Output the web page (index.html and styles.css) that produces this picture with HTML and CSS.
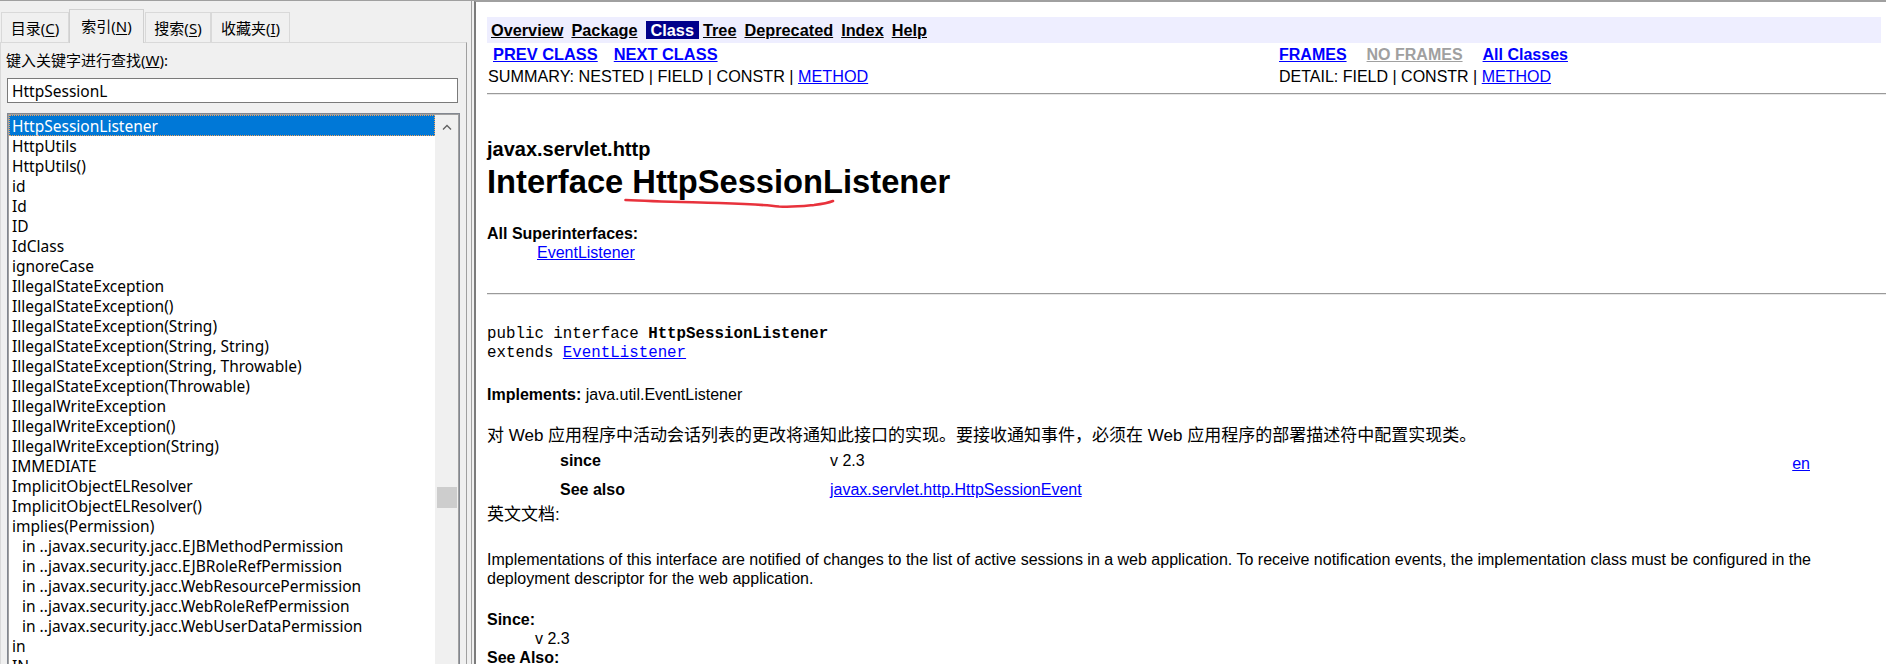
FILE: index.html
```html
<!DOCTYPE html>
<html lang="zh-CN">
<head>
<meta charset="utf-8">
<title>HttpSessionListener</title>
<link rel="stylesheet" href="styles.css">
</head>
<body>
<div class="app">
  <aside class="left">
    <div class="tabs">
      <div class="tab t1">目录(<u>C</u>)</div>
      <div class="tab t2 active">索引(<u>N</u>)</div>
      <div class="tab t3">搜索(<u>S</u>)</div>
      <div class="tab t4">收藏夹(<u>I</u>)</div>
    </div>
    <div class="panel">
      <div class="kw">键入关键字进行查找(<u>W</u>):</div>
      <div class="input">HttpSessionL</div>
      <div class="listbox">
        <ul class="list">
          <li class="sel">HttpSessionListener</li>
          <li>HttpUtils</li>
          <li>HttpUtils()</li>
          <li>id</li>
          <li>Id</li>
          <li>ID</li>
          <li>IdClass</li>
          <li>ignoreCase</li>
          <li>IllegalStateException</li>
          <li>IllegalStateException()</li>
          <li>IllegalStateException(String)</li>
          <li>IllegalStateException(String, String)</li>
          <li>IllegalStateException(String, Throwable)</li>
          <li>IllegalStateException(Throwable)</li>
          <li>IllegalWriteException</li>
          <li>IllegalWriteException()</li>
          <li>IllegalWriteException(String)</li>
          <li>IMMEDIATE</li>
          <li>ImplicitObjectELResolver</li>
          <li>ImplicitObjectELResolver()</li>
          <li>implies(Permission)</li>
          <li class="sub">in ..javax.security.jacc.EJBMethodPermission</li>
          <li class="sub">in ..javax.security.jacc.EJBRoleRefPermission</li>
          <li class="sub">in ..javax.security.jacc.WebResourcePermission</li>
          <li class="sub">in ..javax.security.jacc.WebRoleRefPermission</li>
          <li class="sub">in ..javax.security.jacc.WebUserDataPermission</li>
          <li>in</li>
          <li>IN</li>
        </ul>
        <div class="vscroll">
          <div class="arrow"><svg width="10" height="6" viewBox="0 0 10 6"><polyline points="1,5.5 5,1.5 9,5.5" fill="none" stroke="#606060" stroke-width="1.3"/></svg></div>
          <div class="thumb"></div>
        </div>
      </div>
    </div>
  </aside>
  <div class="splitter"></div>
  <main class="right">
    <nav class="navbar">
      <a href="#">Overview</a>
      <a href="#">Package</a>
      <span class="cur">Class</span>
      <a href="#">Tree</a>
      <a href="#">Deprecated</a>
      <a href="#">Index</a>
      <a href="#">Help</a>
    </nav>
    <div class="subnav">
      <div class="cell links first"><a href="#" class="bl">PREV CLASS</a><a href="#" class="bl">NEXT CLASS</a></div>
      <div class="cell links frames"><a href="#" class="bl">FRAMES</a><a href="#" class="bl gray">NO FRAMES</a><a href="#" class="bl">All Classes</a></div>
      <div class="cell summary">SUMMARY:&nbsp;NESTED&nbsp;|&nbsp;FIELD&nbsp;|&nbsp;CONSTR&nbsp;|&nbsp;<a href="#">METHOD</a></div>
      <div class="cell">DETAIL:&nbsp;FIELD&nbsp;|&nbsp;CONSTR&nbsp;|&nbsp;<a href="#">METHOD</a></div>
    </div>
    <hr class="rule">
    <div class="pkg">javax.servlet.http</div>
    <h1 class="title">Interface <span class="mark">HttpSessionListener<svg class="squiggle" width="212" height="12" viewBox="0 0 212 12"><path d="M1.5,2 C30,3.5 60,4 95,5 C125,6 140,6.5 155,8.5 C168,9.5 180,8 190,7 C198,6 204,5 209,3" fill="none" stroke="#e8323c" stroke-width="2.6" stroke-linecap="round"/></svg></span></h1>
    <dl class="supers">
      <dt>All Superinterfaces:</dt>
      <dd><a href="#">EventListener</a></dd>
    </dl>
    <hr class="rule rule2">
    <pre class="sig">public interface <b>HttpSessionListener</b>
extends <a href="#">EventListener</a></pre>
    <p class="impl"><b>Implements:</b> java.util.EventListener</p>
    <p class="zh">对 Web 应用程序中活动会话列表的更改将通知此接口的实现。要接收通知事件，必须在 Web 应用程序的部署描述符中配置实现类。</p>
    <div class="tags">
      <b class="tk">since</b><span class="tv">v 2.3</span><a href="#" class="en">en</a>
      <b class="tk">See also</b><a href="#" class="tv">javax.servlet.http.HttpSessionEvent</a><span></span>
    </div>
    <p class="zh zh2">英文文档:</p>
    <p class="desc">Implementations of this interface are notified of changes to the list of active sessions in a web application. To receive notification events, the implementation class must be configured in the deployment descriptor for the web application.</p>
    <dl class="since">
      <dt>Since:</dt>
      <dd>v 2.3</dd>
      <dt>See Also:</dt>
    </dl>
  </main>
</div>
</body>
</html>
```
FILE: styles.css
```css
html, body {
  margin: 0;
  padding: 0;
  height: 664px;
  overflow: hidden;
}

body {
  font-family: "Liberation Sans", Arial, "Noto Sans CJK SC", sans-serif;
  background: #f0f0f0;
}

.app {
  display: flex;
  height: 664px;
  box-sizing: border-box;
  border-top: 1px solid #a0a0a0;
  background: #f0f0f0;
  overflow: hidden;
}

/* ---------- left pane ---------- */
.left {
  width: 468px;
  flex: none;
  display: flex;
  flex-direction: column;
  font-family: "Noto Sans", "Noto Sans CJK SC", sans-serif;
  font-size: 15px;
  color: #000;
}

.tabs {
  height: 41px;
  display: flex;
  align-items: flex-end;
  padding-left: 1px;
  position: relative;
  z-index: 1;
}

.tab {
  height: 30px;
  box-sizing: border-box;
  border: 1px solid #d9d9d9;
  border-bottom: none;
  background: #f0f0f0;
  display: flex;
  align-items: center;
  justify-content: center;
  line-height: 20px;
  white-space: nowrap;
}

.tab u { text-decoration: underline; text-underline-offset: 2px; }

.t1 { width: 68px; }
.t2 { width: 75px; }
.t3 { width: 66px; margin-left: 1px; }
.t4 { width: 79px; }

.tab.active {
  height: 34px;
  margin-bottom: -1px;
  padding-bottom: 1px;
  border-color: #d0d0d0;
}

.panel {
  flex: 1;
  width: 467px;
  box-sizing: border-box;
  border: 1px solid #d9d9d9;
  border-right-color: #a0a0a0;
  border-bottom: none;
  padding: 7px 0 0 5px;
  min-height: 0;
}

.kw {
  height: 20px;
  line-height: 20px;
  white-space: nowrap;
}

.input {
  margin: 8px 0 0 1px;
  width: 451px;
  height: 25px;
  box-sizing: border-box;
  border: 1px solid #7a7a7a;
  background: #fff;
  padding-left: 4px;
  line-height: 25px;
  font-size: 15.5px;
}

.listbox {
  margin: 10px 0 0 1px;
  width: 453px;
  height: 560px;
  box-sizing: border-box;
  border: 1px solid #828790;
  padding: 1px;
  box-shadow: inset 0 0 0 1px #a0a0a0;
  display: flex;
  background: #fff;
  overflow: hidden;
}

.list {
  list-style: none;
  margin: 0;
  padding: 0;
  width: 426px;
  flex: none;
  background: #fff;
  font-size: 15.5px;
}

.list li {
  height: 20px;
  line-height: 22px;
  padding-left: 3px;
  white-space: nowrap;
  box-sizing: border-box;
}

.list li.sub { padding-left: 13px; }

.list li.sel {
  background: #0078d7;
  color: #fff;
  outline: 1px dotted #f0a35c;
  outline-offset: -1px;
  height: 21px;
  margin-bottom: -1px;
}

.vscroll {
  width: 23px;
  flex: none;
  background: #f0f0f0;
  display: flex;
  flex-direction: column;
  align-items: center;
}

.arrow {
  height: 24px;
  display: flex;
  align-items: center;
  justify-content: center;
}

.thumb {
  margin-top: 348px;
  width: 20px;
  height: 21px;
  background: #cdcdcd;
}

/* ---------- splitter ---------- */
.splitter {
  width: 3px;
  flex: none;
  border-right: 1px solid #a0a0a0;
  margin-right: 2px;
  background: #f0f0f0;
}

/* ---------- right pane ---------- */
.right {
  flex: 1;
  min-width: 0;
  background: #fff;
  border-left: 2px solid #7c7c7c;
  border-top: 1px solid #a0a0a0;
  padding: 15px 5px 0 11px;
  font-size: 16px;
  line-height: 19px;
  color: #000;
  overflow: hidden;
}

.right a { color: #0000ff; text-decoration: underline; }

.navbar {
  height: 26px;
  background: #eeeeff;
  display: flex;
  align-items: center;
  padding-left: 4px;
  font-weight: bold;
  font-size: 16.3px;
}

.navbar a {
  color: #000;
  margin-right: 8px;
  line-height: 18px;
}

.navbar .cur {
  background: #00008b;
  color: #fff;
  padding: 0 5px;
  margin-right: 4px;
  height: 18px;
  line-height: 18px;
}

.subnav {
  display: grid;
  grid-template-columns: 792px 1fr;
  grid-auto-rows: 22px;
  align-items: center;
  white-space: nowrap;
}

.links { display: flex; }
.links.first { padding-left: 6px; gap: 16px; font-size: 16.4px; }
.links.frames { gap: 20px; }
.summary { padding-left: 1px; font-size: 16.2px; }

.right a.bl { font-weight: bold; color: #0000ff; }
.right a.gray { color: #a0a0a0; }

.rule {
  height: 0;
  border: none;
  border-top: 1px solid #9a9a9a;
  border-bottom: 1px solid #e8e8e8;
  margin: 6px -5px 0 0;
}

.rule2 { margin-top: 31px; }

.pkg {
  margin-top: 43px;
  font-size: 20px;
  line-height: 23px;
  font-weight: bold;
}

.title {
  margin: 2px 0 0;
  font-size: 32.7px;
  line-height: 37px;
  font-weight: bold;
}

.mark { position: relative; }

.squiggle {
  position: absolute;
  left: -8px;
  top: 35px;
}

.supers { margin: 24px 0 0; }
.supers dt { font-weight: bold; }
.supers dd { margin-left: 50px; }

.sig {
  margin: 30px 0 0;
  font-family: "Liberation Mono", "Courier New", monospace;
  font-size: 15.8px;
  line-height: 19px;
}

.impl { margin: 22px 0 0; }

.zh {
  margin: 22px 0 0;
  font-size: 17px;
  line-height: 19px;
  font-family: "Liberation Sans", Arial, "Noto Sans CJK SC", sans-serif;
}

.tags {
  margin-top: 1px;
  display: grid;
  grid-template-columns: 270px 1fr auto;
  grid-auto-rows: 29px;
  align-items: center;
  padding: 0 71px 0 73px;
}

.tk { font-weight: bold; }
.en { margin-top: 6px; }

.zh2 { margin-top: 1px; }

.desc { margin: 26px 0 0; }

.since { margin: 22px 0 0; }
.since dt { font-weight: bold; }
.since dd { margin-left: 48px; }
```
